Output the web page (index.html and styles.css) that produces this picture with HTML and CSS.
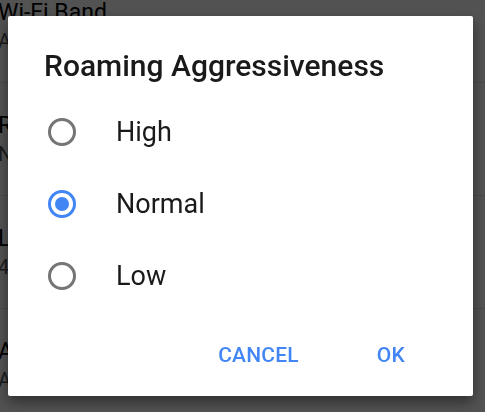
FILE: index.html
```html
<!DOCTYPE html>
<html lang="en">
<head>
    <meta charset="UTF-8">
    <meta name="viewport" content="width=device-width, initial-scale=1.0">
    <title>Roaming Aggressiveness</title>
    <link rel="stylesheet" href="styles.css">
</head>
<body>

    <!-- Settings list behind the dialog -->
    <div class="settings-list">
        <div class="setting-item">
            <div class="setting-title">Wi-Fi Band</div>
            <div class="setting-summary">Automatic</div>
        </div>
        <div class="setting-item">
            <div class="setting-title">Roaming Aggressiveness</div>
            <div class="setting-summary">Normal</div>
        </div>
        <div class="setting-item">
            <div class="setting-title">Listen Interval</div>
            <div class="setting-summary">4</div>
        </div>
        <div class="setting-item">
            <div class="setting-title">Advanced</div>
            <div class="setting-summary">Additional options</div>
        </div>
    </div>

    <div class="scrim"></div>

    <div class="dialog">
        <h2 class="dialog-title">Roaming Aggressiveness</h2>

        <div class="radio-list">
            <label class="radio-row">
                <input type="radio" name="roaming" value="high">
                <span class="radio-mark"></span>
                <span class="radio-label">High</span>
            </label>
            <label class="radio-row">
                <input type="radio" name="roaming" value="normal" checked>
                <span class="radio-mark"></span>
                <span class="radio-label">Normal</span>
            </label>
            <label class="radio-row">
                <input type="radio" name="roaming" value="low">
                <span class="radio-mark"></span>
                <span class="radio-label">Low</span>
            </label>
        </div>

        <div class="dialog-actions">
            <button type="button" class="text-btn">CANCEL</button>
            <button type="button" class="text-btn">OK</button>
        </div>
    </div>

</body>
</html>
```

FILE: styles.css
```css
/* Reset */
* {
    margin: 0;
    padding: 0;
    box-sizing: border-box;
}

body {
    font-family: 'Roboto', 'Noto Sans', sans-serif;
    background-color: #fff;
    height: 100vh;
    overflow: hidden;
}

/* Background settings list */
.settings-list {
    margin-top: -30px;
    margin-left: -2px;
}

.setting-item {
    height: 113px;
    padding-top: 29px;
    border-bottom: 1px solid #e6e6e6;
}

.setting-title {
    font-size: 23px;
    line-height: 28px;
    color: #000;
}

.setting-summary {
    font-size: 20px;
    line-height: 28px;
    color: #555;
}

.scrim {
    position: fixed;
    inset: 0;
    background: rgba(0, 0, 0, 0.68);
}

/* Dialog */
.dialog {
    position: fixed;
    left: 8px;
    top: 16px;
    width: 465px;
    height: 380px;
    background: #fff;
    border-radius: 2px;
    box-shadow: 0 6px 14px rgba(0, 0, 0, 0.45);
    padding-top: 32px;
}

.dialog-title {
    font-size: 30px;
    font-weight: 500;
    line-height: 36px;
    color: #1a1a1a;
    padding-left: 36px;
    margin-bottom: 12px;
}

.radio-row {
    display: flex;
    align-items: center;
    height: 72px;
    padding-left: 40px;
    cursor: pointer;
}

.radio-row input {
    display: none;
}

.radio-mark {
    width: 28px;
    height: 28px;
    border: 3px solid #757575;
    border-radius: 50%;
    display: flex;
    align-items: center;
    justify-content: center;
    flex-shrink: 0;
}

.radio-row input:checked + .radio-mark {
    border-color: #4285f4;
}

.radio-row input:checked + .radio-mark::after {
    content: '';
    width: 14px;
    height: 14px;
    border-radius: 50%;
    background: #4285f4;
}

.radio-label {
    margin-left: 40px;
    font-size: 27px;
    line-height: 32px;
    color: #1a1a1a;
}

.dialog-actions {
    display: flex;
    justify-content: flex-end;
    gap: 38px;
    margin-top: 19px;
    padding-right: 48px;
}

.text-btn {
    background: none;
    border: none;
    font-family: inherit;
    font-size: 21px;
    font-weight: 500;
    letter-spacing: 0.2px;
    line-height: 24px;
    color: #4285f4;
    padding: 12px 20px;
    cursor: pointer;
}
```
